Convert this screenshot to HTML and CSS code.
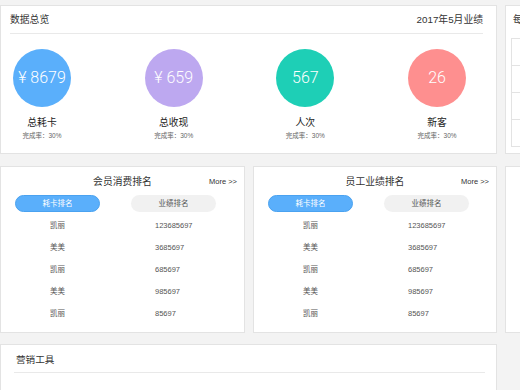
FILE: index.html
```html
<!DOCTYPE html>
<html lang="zh-CN">
<head>
  <meta charset="UTF-8" />
  <meta name="viewport" content="width=device-width, initial-scale=1.0" />
  <title>数据总览</title>
  <link rel="stylesheet" href="styles.css">
</head>
<body>
  <div class="page">

    <!-- ROW 1 -->
    <div class="row row-top">
      <div class="card overview">
        <div class="card-head">
          <span>数据总览</span>
          <span>2017年5月业绩</span>
        </div>
        <div class="stats">
          <div class="stat">
            <div class="circle blue">¥ 8679</div>
            <div class="stat-name">总耗卡</div>
            <div class="stat-rate">完成率：30%</div>
          </div>
          <div class="stat">
            <div class="circle purple">¥ 659</div>
            <div class="stat-name">总收现</div>
            <div class="stat-rate">完成率：30%</div>
          </div>
          <div class="stat">
            <div class="circle teal">567</div>
            <div class="stat-name">人次</div>
            <div class="stat-rate">完成率：30%</div>
          </div>
          <div class="stat">
            <div class="circle red">26</div>
            <div class="stat-name">新客</div>
            <div class="stat-rate">完成率：30%</div>
          </div>
        </div>
      </div>

      <div class="card side">
        <div class="side-title">每日提醒</div>
        <div class="side-table">
          <div class="side-row"></div>
          <div class="side-row"></div>
          <div class="side-row"></div>
          <div class="side-row"></div>
        </div>
      </div>
    </div>

    <!-- ROW 2 -->
    <div class="row row-mid">
      <div class="card rank rank-a">
        <div class="rank-head">
          <span></span>
          <span class="rank-title">会员消费排名</span>
          <span class="more">More &gt;&gt;</span>
        </div>
        <div class="tabs">
          <span class="tab active">耗卡排名</span>
          <span class="tab">业绩排名</span>
        </div>
        <div class="rank-list">
          <div class="rank-row"><span>凯丽</span><span>123685697</span></div>
          <div class="rank-row"><span>美美</span><span>3685697</span></div>
          <div class="rank-row"><span>凯丽</span><span>685697</span></div>
          <div class="rank-row"><span>美美</span><span>985697</span></div>
          <div class="rank-row"><span>凯丽</span><span>85697</span></div>
        </div>
      </div>

      <div class="card rank rank-b">
        <div class="rank-head">
          <span></span>
          <span class="rank-title">员工业绩排名</span>
          <span class="more">More &gt;&gt;</span>
        </div>
        <div class="tabs">
          <span class="tab active">耗卡排名</span>
          <span class="tab">业绩排名</span>
        </div>
        <div class="rank-list">
          <div class="rank-row"><span>凯丽</span><span>123685697</span></div>
          <div class="rank-row"><span>美美</span><span>3685697</span></div>
          <div class="rank-row"><span>凯丽</span><span>685697</span></div>
          <div class="rank-row"><span>美美</span><span>985697</span></div>
          <div class="rank-row"><span>凯丽</span><span>85697</span></div>
        </div>
      </div>

      <div class="card side-mid"></div>
    </div>

    <!-- ROW 3 -->
    <div class="row row-bottom">
      <div class="card tools">
        <div class="tools-head">营销工具</div>
      </div>
    </div>

  </div>
</body>
</html>
```

FILE: styles.css
```css
html, body {
  margin: 0;
  height: 100%;
  overflow: hidden;
}
body {
  background: #f3f3f3;
  font-family: "Liberation Sans", "Noto Sans CJK SC", sans-serif;
  color: #333;
}
.page {
  padding-top: 5px;
  display: flex;
  flex-direction: column;
  gap: 12px;
  width: 800px;
}
.row {
  display: flex;
  gap: 8px;
}
.card {
  background: #fff;
  border: 1px solid #e3e3e3;
  box-sizing: border-box;
  flex: none;
}

/* overview */
.overview {
  width: 497px;
  height: 149px;
}
.card-head {
  display: flex;
  justify-content: space-between;
  height: 27px;
  line-height: 27px;
  margin: 0 13px 0 9px;
  border-bottom: 1px solid #e9e9e9;
  font-size: 9.8px;
  color: #333;
}
.stats {
  display: flex;
  gap: 73.7px;
  padding: 15px 0 0 12px;
}
.stat {
  width: 58px;
  text-align: center;
  white-space: nowrap;
}
.circle {
  width: 58px;
  height: 58px;
  border-radius: 50%;
  color: #fff;
  font-family: Roboto, "Liberation Sans", sans-serif;
  font-weight: 300;
  font-size: 16px;
  line-height: 58px;
}
.blue { background: #5aaffb; }
.purple { background: #bda8f0; }
.teal { background: #1ecfb6; }
.red { background: #fe8f8f; }
.stat-name {
  margin-top: 9px;
  font-size: 9.8px;
  line-height: 14px;
  color: #222;
}
.stat-rate {
  margin-top: 1px;
  font-size: 6.5px;
  line-height: 10px;
  color: #666;
}

/* right column */
.side {
  width: 200px;
  height: 149px;
  padding: 0 0 0 5px;
}
.side-title {
  height: 27px;
  line-height: 27px;
  font-size: 9.8px;
  padding-left: 2px;
}
.side-table {
  margin-top: 5px;
  border: 1px solid #e3e3e3;
}
.side-row {
  height: 26px;
  border-top: 1px solid #e3e3e3;
}
.side-row:first-child {
  border-top: none;
}
.side-mid {
  width: 200px;
  height: 167px;
}

/* ranking cards */
.rank {
  height: 167px;
}
.rank-a { width: 245px; }
.rank-b { width: 244px; }
.rank-head {
  display: grid;
  grid-template-columns: 1fr auto 1fr;
  align-items: center;
  height: 28px;
}
.rank-title {
  font-size: 9.8px;
  color: #333;
}
.more {
  justify-self: end;
  margin-right: 7px;
  font-size: 7.5px;
  color: #333;
}
.tabs,
.rank-row {
  display: grid;
  grid-template-columns: 85px 85px;
  column-gap: 31px;
  padding-left: 14px;
}
.tab {
  height: 17px;
  line-height: 17px;
  border-radius: 9px;
  text-align: center;
  font-size: 7.5px;
  background: #f1f1f1;
  color: #555;
  box-sizing: border-box;
}
.tab.active {
  background: #5aaffb;
  border: 1px solid #4aa2f0;
  line-height: 15px;
  color: #fff;
}
.rank-list {
  margin-top: 3px;
}
.rank-row {
  height: 22px;
  line-height: 22px;
  font-size: 7.5px;
  color: #555;
}
.rank-row span:first-child {
  text-align: center;
}
.rank-row span:last-child {
  padding-left: 24px;
}

/* tools */
.tools {
  width: 497px;
  height: 60px;
  margin-top: -1px;
}
.tools-head {
  margin: 0 11px 0 13px;
  height: 27px;
  line-height: 30px;
  padding-left: 2px;
  border-bottom: 1px solid #e9e9e9;
  font-size: 9.6px;
  color: #333;
}
```
